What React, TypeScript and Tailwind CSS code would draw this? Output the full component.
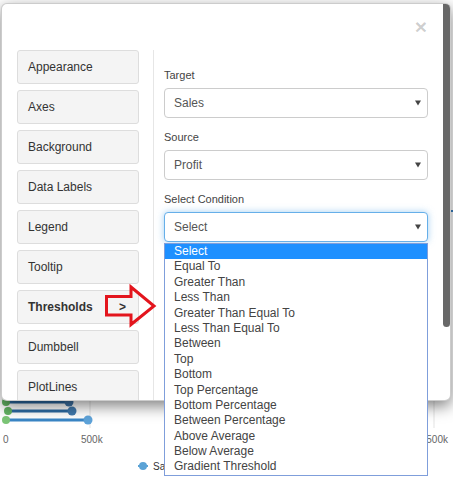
import React from "react";

const navItems = [
  "Appearance",
  "Axes",
  "Background",
  "Data Labels",
  "Legend",
  "Tooltip",
  "Thresholds",
  "Dumbbell",
  "PlotLines",
];

const options = [
  "Select",
  "Equal To",
  "Greater Than",
  "Less Than",
  "Greater Than Equal To",
  "Less Than Equal To",
  "Between",
  "Top",
  "Bottom",
  "Top Percentage",
  "Bottom Percentage",
  "Between Percentage",
  "Above Average",
  "Below Average",
  "Gradient Threshold",
];

function Caret() {
  return (
    <svg width="6" height="6" viewBox="0 0 6 6" className="absolute right-[6px] top-[11px]">
      <path d="M0 0.5 L6 0.5 L3 5.5 Z" fill="#444" />
    </svg>
  );
}

function Field({
  label,
  value,
  focused,
  children,
}: {
  label: string;
  value: string;
  focused?: boolean;
  children?: React.ReactNode;
}) {
  return (
    <div className="mb-[12px]">
      <div className="text-[11px] leading-[14px] text-[#444] mb-[6px]">{label}</div>
      <div
        className={
          focused
            ? "relative h-[30px] rounded-[4px] border border-[#66afe9] shadow-[0_0_7px_rgba(102,175,233,0.6)] bg-white"
            : "relative h-[30px] rounded-[4px] border border-[#cccccc] bg-white"
        }
      >
        <div className="pl-[9px] text-[12px] leading-[28px] text-[#555]">{value}</div>
        <Caret />
        {children}
      </div>
    </div>
  );
}

export default function App() {
  return (
    <div
      className="relative w-[453px] h-[480px] overflow-hidden bg-white"
      style={{ fontFamily: '"Liberation Sans", Arial, sans-serif' }}
    >
      {/* chart behind the dialog */}
      <svg width="453" height="480" className="absolute left-0 top-0">
        <line x1="90" y1="392" x2="90" y2="428" stroke="#e3e3e3" strokeWidth="1" />
        <line x1="434" y1="392" x2="434" y2="428" stroke="#e3e3e3" strokeWidth="1" />
        <line x1="6" y1="402" x2="69" y2="402" stroke="#2c6aa3" strokeWidth="3" />
        <circle cx="6" cy="402" r="4" fill="#63b363" />
        <circle cx="69" cy="402" r="4.5" fill="#3f74a6" />
        <line x1="8" y1="411" x2="72" y2="411" stroke="#2c6aa3" strokeWidth="3" />
        <circle cx="8" cy="411" r="4" fill="#63b363" />
        <circle cx="72" cy="411" r="4.5" fill="#4079ad" />
        <line x1="6" y1="420" x2="88" y2="420" stroke="#3a86c6" strokeWidth="3" />
        <circle cx="6" cy="420" r="4" fill="#7cc576" />
        <circle cx="88" cy="420" r="4.5" fill="#5ea3d9" />
        <line x1="449" y1="211" x2="453" y2="211" stroke="#3a7fc0" strokeWidth="2" />
        <text x="3" y="443" fontSize="10" fill="#666" fontFamily="Liberation Sans, Arial, sans-serif">0</text>
        <text x="81" y="443" fontSize="10" fill="#666" fontFamily="Liberation Sans, Arial, sans-serif">500k</text>
        <text x="448" y="443" fontSize="10" fill="#666" textAnchor="end" fontFamily="Liberation Sans, Arial, sans-serif">500k</text>
        <line x1="138" y1="466" x2="148" y2="466" stroke="#5ba3d6" strokeWidth="2" />
        <circle cx="143" cy="466" r="4" fill="#5ba3d6" />
        <text x="153" y="470" fontSize="10" fill="#333" fontFamily="Liberation Sans, Arial, sans-serif">Sa</text>
      </svg>

      {/* dialog */}
      <div className="absolute left-[1px] top-[3px] w-[450px] h-[398px] rounded-[6px] border border-black/20 bg-white shadow-[0_5px_15px_rgba(0,0,0,0.5)] flex flex-col">
        <div className="h-[46px] flex justify-end pr-[23px] pt-[13px]">
          <span className="text-[21px] font-bold leading-[20px] text-black/20">×</span>
        </div>
        <div className="flex flex-1 min-h-0 pl-[15px]">
          <div className="w-[122px] flex flex-col gap-[6px] overflow-hidden">
            {navItems.map((n) => (
              <div
                key={n}
                className="shrink-0 h-[34px] rounded-[3px] border border-[#dddddd] bg-[#f4f4f4] pl-[10px] pr-[12px] flex items-center justify-between text-[12px] text-[#333]"
              >
                <span className={n === "Thresholds" ? "font-bold" : ""}>{n}</span>
                {n === "Thresholds" && <span className="font-bold text-[12px]">&gt;</span>}
              </div>
            ))}
          </div>
          <div className="ml-[14px] border-l border-[#e6e6e6] pl-[10px] pt-[18px] w-[275px]">
            <div className="w-[264px]">
              <Field label="Target" value="Sales" />
              <Field label="Source" value="Profit" />
              <Field label="Select Condition" value="Select" focused>
                <div className="absolute left-[-1px] top-[30px] w-[264px] border border-[#7f9edb] bg-white z-10">
                  {options.map((o, i) => (
                    <div
                      key={o}
                      className={
                        i === 0
                          ? "h-[15.4px] leading-[15.4px] pl-[9px] text-[12px] bg-[#1e90ff] text-white"
                          : "h-[15.4px] leading-[15.4px] pl-[9px] text-[12px] text-[#444]"
                      }
                    >
                      {o}
                    </div>
                  ))}
                </div>
              </Field>
            </div>
          </div>
        </div>
        {/* scrollbar thumb */}
        <div className="absolute right-0 top-0 w-[7px] h-[323px] rounded-tr-[5px] rounded-b-[4px] bg-[#686868]" />
      </div>

      {/* red annotation arrow */}
      <svg width="453" height="480" className="absolute left-0 top-0 pointer-events-none">
        <polygon
          points="106.5,296.5 131,296.5 131,287 154,306 131,324.5 131,315 106.5,315"
          fill="none"
          stroke="#e3151d"
          strokeWidth="3"
        />
      </svg>
    </div>
  );
}
